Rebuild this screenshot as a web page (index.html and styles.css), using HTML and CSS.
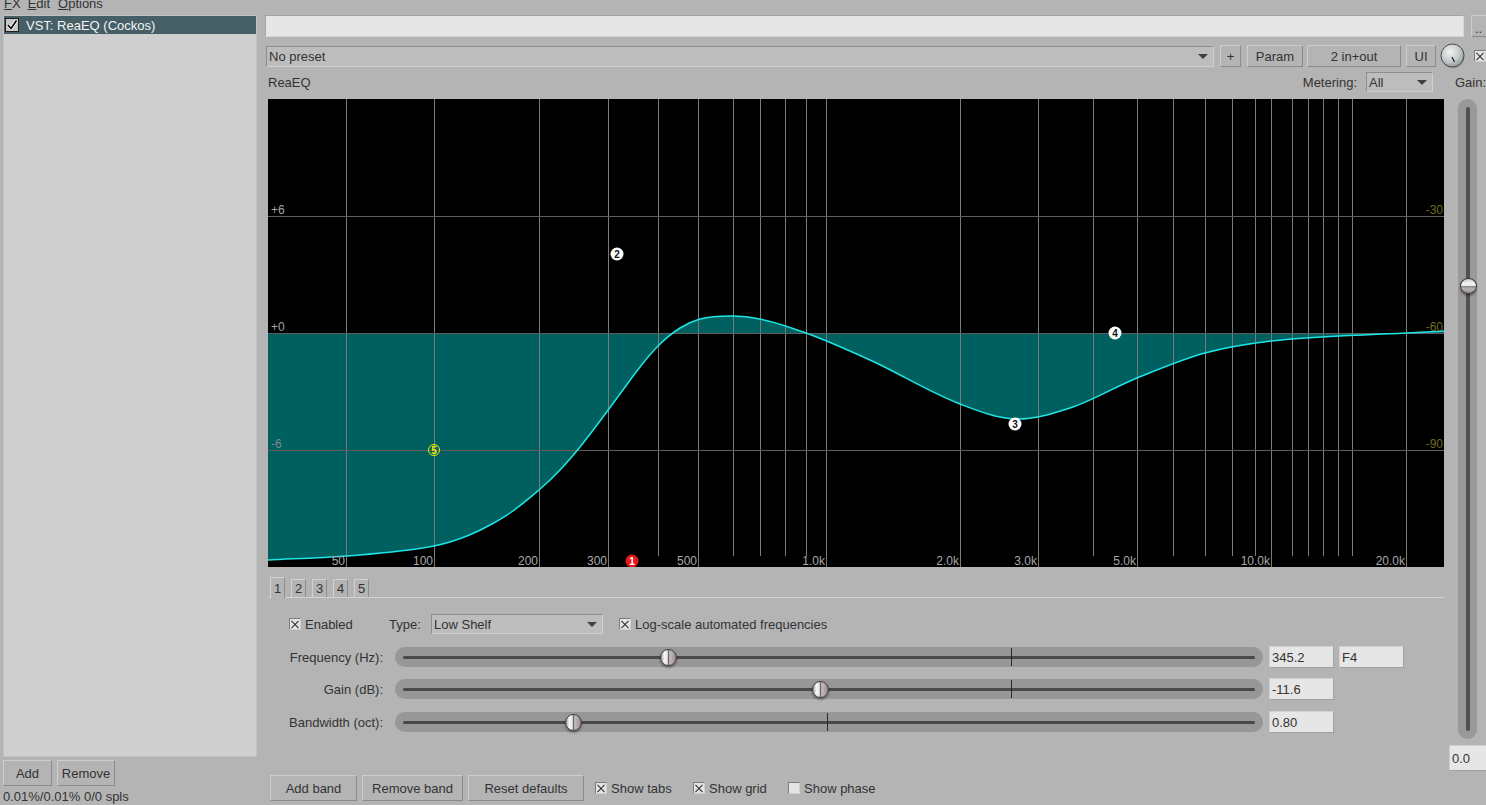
FILE: index.html
```html
<!DOCTYPE html>
<html>
<head>
<meta charset="utf-8">
<title>ReaEQ</title>
<link rel="stylesheet" href="styles.css">
</head>
<body>
<div class="menubar">
  <span class="menu"><u>F</u>X</span>
  <span class="menu"><u>E</u>dit</span>
  <span class="menu"><u>O</u>ptions</span>
</div>
<div class="main">
  <div class="sidebar">
    <div class="fxlist">
      <div class="fxrow">
        <svg class="fxcheck" width="14" height="14" viewBox="0 0 14 14"><rect x="0.5" y="0.5" width="13" height="13" fill="#c9c9c9" stroke="#1e1e1e"/><path d="M3 7 L6 10.5 L11.5 2.5" fill="none" stroke="#fff" stroke-width="3.2"/><path d="M3 7 L6 10.5 L11.5 2.5" fill="none" stroke="#000" stroke-width="1.6"/></svg>
        <span>VST: ReaEQ (Cockos)</span>
      </div>
    </div>
    <div class="sidebtns">
      <button class="btn w-add">Add</button>
      <button class="btn w-remove">Remove</button>
    </div>
    <div class="status">0.01%/0.01% 0/0 spls</div>
  </div>

  <div class="panel">
    <div class="toprow">
      <div class="namefield"></div>
      <button class="btn dots">..</button>
    </div>

    <div class="presetrow">
      <div class="combo preset"><span>No preset</span><span class="arrow"></span></div>
      <button class="btn b-plus">+</button>
      <button class="btn b-param">Param</button>
      <button class="btn b-io">2 in+out</button>
      <button class="btn b-ui">UI</button>
      <svg class="knob" width="26" height="26" viewBox="0 0 26 26">
        <defs>
          <radialGradient id="kg" cx="40%" cy="35%" r="70%">
            <stop offset="0" stop-color="#f2f2f2"/>
            <stop offset="0.6" stop-color="#c4c9cc"/>
            <stop offset="1" stop-color="#8d9396"/>
          </radialGradient>
        </defs>
        <circle cx="13" cy="14" r="11.5" fill="#8a8a8a" opacity="0.5"/>
        <circle cx="12.5" cy="12.5" r="11.5" fill="url(#kg)" stroke="#4a4a4a" stroke-width="1"/>
        <path d="M12 14 L14.5 19" stroke="#222" stroke-width="1.3"/>
      </svg>
      <span class="cb x small-gap"></span>
    </div>

    <div class="inforow">
      <span class="title">ReaEQ</span>
      <span class="spacer"></span>
      <span class="meterlbl">Metering:</span>
      <div class="combo meter"><span>All</span><span class="arrow"></span></div>
      <span class="gainlbl">Gain:</span>
    </div>

    <div class="editor">
      <div class="eq">
        <svg class="graph" width="1176" height="468" viewBox="0 0 1176 468">
          <rect x="0" y="0" width="1176" height="468" fill="#000"/>
          <path class="fill" d="M0,234 L0,461 C26,459.67 52,459.15 78,457 C107.33,454.65 136.67,452.87 166,447 C171.33,445.93 176.67,444.6 182,443 C188.67,441 195.33,438.6 202,435.8 C208.67,433 215.33,429.67 222,426 C228.67,422.33 235.33,418.47 242,414 C251.67,407.52 261.33,399.22 271,391 C278,385.05 285,378.36 292,371 C298.67,363.99 305.33,356.17 312,348 C318.67,339.83 325.33,330.83 332,322 C338.67,313.17 345.33,304 352,295 C358.67,286 365.33,276.39 372,268 C378,260.45 384,252.95 390,247 C397.33,239.72 404.67,233.65 412,229 C418.67,224.77 425.33,221.8 432,220 C443,217.02 454,216.89 465,217 C474,217.09 483,218.13 492,220 C507.33,223.18 522.67,228.43 538,234 C559.33,241.75 580.67,251.29 602,261 C632,274.66 662,293.58 692,305 C710.33,311.98 728.67,319.33 747,320 C765.33,320.67 783.67,314.94 802,309 C824.33,301.77 846.67,288.1 869,279 C891.67,269.76 914.33,260.23 937,254 C959,247.96 981,244.65 1003,242 C1048,236.57 1093,236.52 1138,234 C1150.67,233.29 1163.33,232.67 1176,232 L1176,234 Z"/>
          <g class="vgrid">
            <line x1="78.5" y1="0" x2="78.5" y2="468"/>
            <line x1="166.5" y1="0" x2="166.5" y2="468"/>
            <line x1="271.5" y1="0" x2="271.5" y2="468"/>
            <line x1="340.5" y1="0" x2="340.5" y2="468"/>
            <line x1="390.5" y1="0" x2="390.5" y2="457"/>
            <line x1="430.5" y1="0" x2="430.5" y2="468"/>
            <line x1="465.5" y1="0" x2="465.5" y2="457"/>
            <line x1="492.5" y1="0" x2="492.5" y2="457"/>
            <line x1="517.5" y1="0" x2="517.5" y2="457"/>
            <line x1="538.5" y1="0" x2="538.5" y2="457"/>
            <line x1="558.5" y1="0" x2="558.5" y2="468"/>
            <line x1="692.5" y1="0" x2="692.5" y2="468"/>
            <line x1="770.5" y1="0" x2="770.5" y2="468"/>
            <line x1="825.5" y1="0" x2="825.5" y2="457"/>
            <line x1="869.5" y1="0" x2="869.5" y2="468"/>
            <line x1="905.5" y1="0" x2="905.5" y2="457"/>
            <line x1="937.5" y1="0" x2="937.5" y2="457"/>
            <line x1="964.5" y1="0" x2="964.5" y2="457"/>
            <line x1="987.5" y1="0" x2="987.5" y2="457"/>
            <line x1="1003.5" y1="0" x2="1003.5" y2="468"/>
            <line x1="1024.5" y1="0" x2="1024.5" y2="457"/>
            <line x1="1040.5" y1="0" x2="1040.5" y2="457"/>
            <line x1="1055.5" y1="0" x2="1055.5" y2="457"/>
            <line x1="1070.5" y1="0" x2="1070.5" y2="457"/>
            <line x1="1084.5" y1="0" x2="1084.5" y2="457"/>
            <line x1="1138.5" y1="0" x2="1138.5" y2="468"/>
          </g>
          <g class="hgrid">
            <line x1="0" y1="117.5" x2="1176" y2="117.5"/>
            <line x1="0" y1="234.5" x2="1176" y2="234.5"/>
            <line x1="0" y1="351.5" x2="1176" y2="351.5"/>
          </g>
          <path class="curve" d="M0,461 C26,459.67 52,459.15 78,457 C107.33,454.65 136.67,452.87 166,447 C171.33,445.93 176.67,444.6 182,443 C188.67,441 195.33,438.6 202,435.8 C208.67,433 215.33,429.67 222,426 C228.67,422.33 235.33,418.47 242,414 C251.67,407.52 261.33,399.22 271,391 C278,385.05 285,378.36 292,371 C298.67,363.99 305.33,356.17 312,348 C318.67,339.83 325.33,330.83 332,322 C338.67,313.17 345.33,304 352,295 C358.67,286 365.33,276.39 372,268 C378,260.45 384,252.95 390,247 C397.33,239.72 404.67,233.65 412,229 C418.67,224.77 425.33,221.8 432,220 C443,217.02 454,216.89 465,217 C474,217.09 483,218.13 492,220 C507.33,223.18 522.67,228.43 538,234 C559.33,241.75 580.67,251.29 602,261 C632,274.66 662,293.58 692,305 C710.33,311.98 728.67,319.33 747,320 C765.33,320.67 783.67,314.94 802,309 C824.33,301.77 846.67,288.1 869,279 C891.67,269.76 914.33,260.23 937,254 C959,247.96 981,244.65 1003,242 C1048,236.57 1093,236.52 1138,234 C1150.67,233.29 1163.33,232.67 1176,232"/>
          <g class="dbl">
            <text x="3" y="115">+6</text>
            <text x="3" y="232">+0</text>
            <text x="3" y="349" class="dim">-6</text>
          </g>
          <g class="dbr">
            <text x="1175" y="115">-30</text>
            <text x="1175" y="232">-60</text>
            <text x="1175" y="349">-90</text>
          </g>
          <g class="fl">
            <text x="77" y="466">50</text>
            <text x="165" y="466">100</text>
            <text x="270" y="466">200</text>
            <text x="339" y="466">300</text>
            <text x="429" y="466">500</text>
            <text x="557" y="466">1.0k</text>
            <text x="691" y="466">2.0k</text>
            <text x="769" y="466">3.0k</text>
            <text x="868" y="466">5.0k</text>
            <text x="1002" y="466">10.0k</text>
            <text x="1137" y="466">20.0k</text>
          </g>
          <g class="bands">
            <circle cx="364" cy="462" r="6.5" fill="#e8161c"/>
            <text x="364" y="465.5" fill="#fff">1</text>
            <circle cx="349" cy="155" r="6.5" fill="#fff"/>
            <text x="349" y="158.5" fill="#111">2</text>
            <circle cx="747" cy="325" r="6.5" fill="#fff"/>
            <text x="747" y="328.5" fill="#111">3</text>
            <circle cx="847" cy="234" r="6.5" fill="#fff"/>
            <text x="847" y="237.5" fill="#111">4</text>
            <circle cx="166" cy="351" r="5.5" fill="none" stroke="#f0f000" stroke-width="1"/>
            <text x="166" y="354.5" fill="#f0f000">5</text>
          </g>
        </svg>

        <div class="tabs">
          <span class="tab sel">1</span>
          <span class="tab">2</span>
          <span class="tab">3</span>
          <span class="tab">4</span>
          <span class="tab">5</span>
        </div>

        <div class="bandrow">
          <span class="cb x"></span>
          <span class="lbl enabled">Enabled</span>
          <span class="lbl type">Type:</span>
          <div class="combo typecombo"><span>Low Shelf</span><span class="arrow"></span></div>
          <span class="cb x logcb"></span>
          <span class="lbl">Log-scale automated frequencies</span>
        </div>

        <div class="sliders">
          <div class="srow">
            <span class="slbl">Frequency (Hz):</span>
            <div class="track"><div class="tline"></div><span class="mark" style="left:616px"></span><span class="thumb" style="left:265px"></span></div>
            <div class="vbox">345.2</div>
            <div class="vbox">F4</div>
          </div>
          <div class="srow">
            <span class="slbl">Gain (dB):</span>
            <div class="track"><div class="tline"></div><span class="mark" style="left:616px"></span><span class="thumb" style="left:417px"></span></div>
            <div class="vbox">-11.6</div>
          </div>
          <div class="srow">
            <span class="slbl">Bandwidth (oct):</span>
            <div class="track"><div class="tline"></div><span class="mark" style="left:432px"></span><span class="thumb" style="left:170px"></span></div>
            <div class="vbox">0.80</div>
          </div>
        </div>

        <div class="bottom">
          <button class="btn b-addband">Add band</button>
          <button class="btn b-remband">Remove band</button>
          <button class="btn b-reset">Reset defaults</button>
          <span class="chk g-tabs"><span class="cb x"></span><span class="lbl">Show tabs</span></span>
          <span class="chk g-grid"><span class="cb x"></span><span class="lbl">Show grid</span></span>
          <span class="chk g-phase"><span class="cb"></span><span class="lbl">Show phase</span></span>
        </div>
      </div>

      <div class="gaincol">
        <div class="vslider"><div class="vline"></div><span class="vthumb"></span></div>
        <div class="vbox gainval">0.0</div>
      </div>
    </div>
  </div>
</div>
</body>
</html>
```
FILE: styles.css
```css
* { box-sizing: border-box; }
html, body { margin: 0; padding: 0; }
body {
  width: 1486px;
  height: 805px;
  overflow: hidden;
  background: #b4b4b4;
  font-family: "Liberation Sans", Arial, sans-serif;
  font-size: 13px;
  color: #333;
}

/* menu */
.menubar { height: 13px; overflow: hidden; display: flex; padding-left: 4px; }
.menu { margin-top: -4px; line-height: 15px; margin-right: 7px; }
.menu:nth-child(2) { margin-right: 8px; }

.main { display: flex; }

/* sidebar */
.sidebar { width: 254px; margin-left: 3px; display: flex; flex-direction: column; flex: none; }
.fxlist { margin-top: 2px; height: 742px; background: #cfcfcf; border: 1px solid #c2c2c2; }
.fxrow { height: 18px; display: flex; align-items: center; background: #465f66; color: #f4f4f4; padding-left: 1px; }
.fxcheck { margin-right: 7px; }
.sidebtns { display: flex; gap: 5px; margin-top: 3px; }
.status { margin-top: 3px; line-height: 16px; white-space: nowrap; }

/* buttons */
.btn {
  font: inherit;
  color: #333;
  background: #b4b4b4;
  border: 1px solid;
  border-color: #cdcdcd #8a8a8a #8a8a8a #cdcdcd;
  height: 26px;
  padding: 0;
  margin: 0;
  display: flex;
  align-items: center;
  justify-content: center;
  white-space: nowrap;
  flex: none;
}
.w-add { width: 49px; }
.w-remove { width: 58px; }

/* panel */
.panel { margin-left: 8px; width: 1221px; display: flex; flex-direction: column; flex: none; }
.toprow { display: flex; margin-top: 2px; height: 22px; }
.namefield { flex: none; width: 1199px; height: 22px; background: #e6e6e6; border: 1px solid; border-color: #a2a2a2 #d6d6d6 #d6d6d6 #a2a2a2; }
.dots { margin-left: 7px; width: 20px; height: 22px; align-items: flex-end; line-height: 14px; justify-content: flex-start; padding-left: 3px; }

.presetrow { display: flex; align-items: center; margin-top: 8px; height: 22px; }
.combo {
  flex: none;
  display: flex;
  align-items: center;
  justify-content: space-between;
  background: #bdbdbd;
  border: 1px solid;
  border-color: #8e8e8e #d0d0d0 #d0d0d0 #8e8e8e;
  padding: 0 5px 0 2px;
}
.arrow { width: 0; height: 0; border-left: 5px solid transparent; border-right: 5px solid transparent; border-top: 5px solid #404040; }
.preset { margin-left: 1px; width: 948px; height: 21px; }
.b-plus { margin-left: 6px; width: 21px; height: 22px; }
.b-param { margin-left: 6px; width: 56px; height: 22px; }
.b-io { margin-left: 4px; width: 94px; height: 22px; }
.b-ui { margin-left: 5px; width: 30px; height: 22px; }
.knob { margin-left: 4px; flex: none; }
.small-gap { margin-left: 8px; }

/* checkbox */
.cb {
  display: inline-block;
  flex: none;
  width: 12px;
  height: 12px;
  background: #e4e4e4;
  border: 1px solid;
  border-color: #7c7c7c #cfcfcf #cfcfcf #7c7c7c;
  position: relative;
}
.cb.x::before, .cb.x::after {
  content: "";
  position: absolute;
  left: 0px;
  top: 4.5px;
  width: 10px;
  height: 1px;
  background: #2a2a2a;
}
.cb.x::before { transform: rotate(45deg); }
.cb.x::after { transform: rotate(-45deg); }

.inforow { display: flex; align-items: center; margin-top: 5px; height: 20px; }
.title { margin-left: 3px; }
.spacer { flex: 1; }
.meter { margin-left: 9px; width: 67px; height: 20px; }
.gainlbl { margin-left: 22px; width: 31px; white-space: nowrap; flex: none; }

/* editor */
.editor { display: flex; margin-top: 7px; }
.eq { margin-left: 3px; width: 1176px; display: flex; flex-direction: column; flex: none; }
.graph { display: block; }
.graph .fill { fill: #005f5f; }
.graph .vgrid line { stroke: #7a7a7a; stroke-width: 1; }
.graph .hgrid line { stroke: #5e5e5e; stroke-width: 1; }
.graph .curve { fill: none; stroke: #1ee6e6; stroke-width: 1.5; }
.graph text { font-family: "Liberation Sans", Arial, sans-serif; font-size: 12px; }
.graph .dbl text { fill: #a4a4a4; }
.graph .dbl text.dim { fill: #7d8c8c; }
.graph .dbr text { fill: #6d6d1c; text-anchor: end; }
.graph .fl text { fill: #a8a8a8; text-anchor: end; }
.graph .bands text { font-size: 10px; font-weight: bold; text-anchor: middle; }

.tabs {
  display: flex;
  align-items: flex-end;
  gap: 6px;
  margin-top: 9px;
  height: 22px;
  padding-left: 2px;
  border-bottom: 1px solid #d2d2d2;
}
.tab {
  width: 15px;
  height: 18px;
  line-height: 17px;
  text-align: center;
  border: 1px solid;
  border-color: #d2d2d2 #8e8e8e transparent #d2d2d2;
  border-bottom: none;
  font-size: 13px;
}
.tab.sel { height: 21px; line-height: 22px; margin-bottom: -1px; background: #b4b4b4; }

.bandrow { display: flex; align-items: center; margin-top: 16px; height: 20px; padding-left: 21px; }
.lbl { white-space: nowrap; }
.enabled { margin-left: 4px; width: 84px; }
.type { width: 42px; }
.typecombo { width: 172px; height: 20px; }
.logcb { margin-left: 16px; margin-right: 4px; }

.sliders { display: flex; flex-direction: column; margin-top: 12px; }
.srow { display: flex; align-items: center; height: 22px; }
.srow + .srow { margin-top: 10px; }
.srow:last-child { margin-top: 11px; }
.slbl { width: 115px; text-align: right; white-space: nowrap; flex: none; }
.track {
  flex: none;
  margin-left: 12px;
  width: 868px;
  height: 20px;
  border-radius: 10px;
  background: #979797;
  position: relative;
  display: flex;
  align-items: center;
  padding: 0 8px;
}
.tline { flex: 1; height: 3px; background: #4a4a4a; border-radius: 2px; }
.mark { position: absolute; top: 1px; width: 1px; height: 18px; background: #2a2a2a; }
.thumb {
  position: absolute;
  top: 1.5px;
  width: 17px;
  height: 17px;
  border-radius: 50%;
  border: 1px solid #3c3c3c;
  background: linear-gradient(90deg, #9a9a9a 0%, #f6f6f6 22%, #e6e6e6 42%, #6a6a6a 50%, #c8bcbc 58%, #a89c9c 85%, #8a8080 100%);
  box-shadow: 0 2px 2px rgba(0,0,0,0.35);
}
.vbox {
  flex: none;
  margin-left: 6px;
  width: 65px;
  height: 22px;
  background: #e6e6e6;
  border: 1px solid;
  border-color: #d0d0d0 #a0a0a0 #a0a0a0 #d0d0d0;
  display: flex;
  align-items: center;
  padding-left: 2px;
}
.vbox + .vbox { margin-left: 5px; }

.bottom { display: flex; align-items: center; margin-top: 42px; height: 26px; }
.b-addband { margin-left: 2px; width: 87px; }
.b-remband { margin-left: 5px; width: 101px; }
.b-reset { margin-left: 5px; width: 116px; }
.chk { display: flex; align-items: center; flex: none; }
.chk .lbl { margin-left: 4px; }
.g-tabs { margin-left: 11px; width: 98px; }
.g-grid { width: 95px; }

/* gain column */
.gaincol { margin-left: 5px; width: 37px; display: flex; flex-direction: column; flex: none; }
.vslider {
  margin-left: 9px;
  width: 19px;
  height: 640px;
  border-radius: 10px;
  background: #999;
  position: relative;
  display: flex;
  justify-content: center;
  padding: 8px 0;
}
.vline { width: 4px; background: #515151; border-radius: 2px; }
.vthumb {
  position: absolute;
  left: 1.5px;
  top: 179px;
  width: 17px;
  height: 16px;
  border-radius: 50%;
  border: 1px solid #3c3c3c;
  background: linear-gradient(180deg, #cfcfcf 0%, #f4f4f4 35%, #e6e6e6 48%, #8a8a8a 52%, #b8b0b0 70%, #9a9292 100%);
  box-shadow: 0 2px 2px rgba(0,0,0,0.35);
}
.gainval { margin-left: 0; margin-top: 6px; width: 40px; height: 26px; }
```
